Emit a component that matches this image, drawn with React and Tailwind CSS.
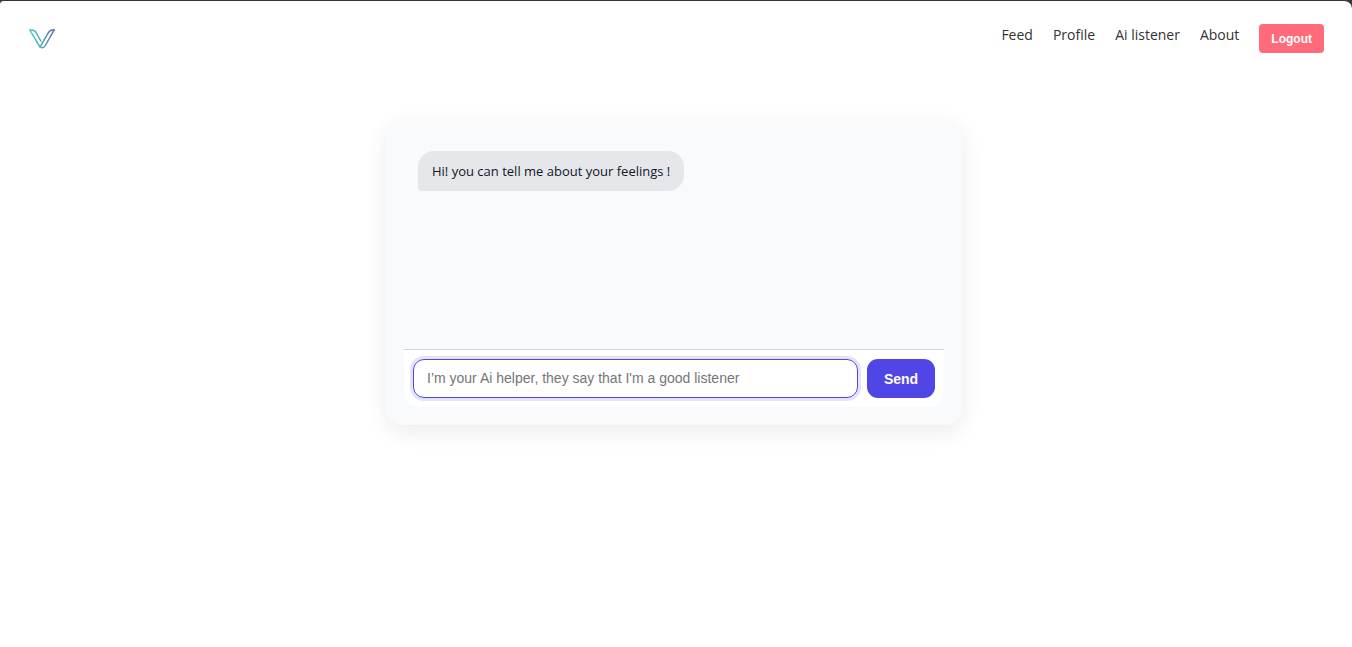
const links = ["Feed", "Profile", "Ai listener", "About"];

function Logo() {
  return (
    <svg width="28" height="22" viewBox="0 0 28 22" fill="none" aria-hidden="true">
      <defs>
        <linearGradient id="brand" x1="1" y1="8" x2="27" y2="8" gradientUnits="userSpaceOnUse">
          <stop offset="0" stopColor="#4fcfcb" />
          <stop offset="0.5" stopColor="#4aa5b8" />
          <stop offset="1" stopColor="#6f68a8" />
        </linearGradient>
      </defs>
      <path
        d="M12.8 13 7.8 4.2C6.6 2.2 4.8 1.7 1.8 1.8L12 19.2 20.2 4.8C21.5 2.5 23.4 1.7 26.2 1.8L17 18C16.2 19.4 15 20 13.4 19.6"
        stroke="url(#brand)"
        strokeWidth="1.5"
        strokeLinecap="round"
        strokeLinejoin="round"
      />
    </svg>
  );
}

function Header() {
  return (
    <header className="flex items-start justify-between px-7 pt-[23px]">
      <a href="#home" aria-label="Home" className="pt-1">
        <Logo />
      </a>
      <nav className="flex items-start gap-5 text-sm leading-[22px] text-[#333333]">
        {links.map((label) => (
          <a key={label} href={"#" + label.toLowerCase().replace(" ", "-")}>
            {label}
          </a>
        ))}
        <button
          type="button"
          className="h-[29px] rounded bg-[#ff6b7a] px-3 font-['Liberation_Sans',sans-serif] text-xs font-bold text-white"
        >
          Logout
        </button>
      </nav>
    </header>
  );
}

function Chat() {
  return (
    <section className="flex w-full max-w-[576px] flex-col rounded-2xl bg-[#f9fafc] p-[18px] shadow-[0_7px_22px_rgba(0,0,0,0.08)]">
      <div className="flex min-h-[212px] flex-col items-start px-[14px] pt-[14px]">
        <p className="rounded-2xl rounded-bl bg-[#e5e7eb] px-[14px] py-[10px] text-[13px] leading-5 text-[#111827]">
          Hi! you can tell me about your feelings !
        </p>
      </div>
      <form
        onSubmit={(event) => event.preventDefault()}
        className="flex gap-[9px] rounded-b-[14px] border-t border-[#d1d5db] bg-white p-[9px] font-['Liberation_Sans',sans-serif] text-sm"
      >
        <input
          type="text"
          aria-label="Message"
          placeholder="I’m your Ai helper, they say that I'm a good listener"
          className="h-[39px] min-w-0 flex-1 rounded-[11px] border border-[#4f46e5] px-[13px] pb-0.5 shadow-[0_0_0_3px_rgba(79,70,229,0.15)] outline-none placeholder:text-[#757575]"
        />
        <button type="submit" className="w-[68px] rounded-[11px] bg-[#4f46e5] font-bold text-white">
          Send
        </button>
      </form>
    </section>
  );
}

export default function App() {
  return (
    <div className="bg-[#35353a]">
      <div className="min-h-screen rounded-tl-sm rounded-tr-lg border-t border-[#35353a] bg-white font-['Open_Sans','Noto_Sans',sans-serif]">
        <Header />
        <main className="flex justify-center pt-[66px] pr-1">
          <Chat />
        </main>
      </div>
    </div>
  );
}
